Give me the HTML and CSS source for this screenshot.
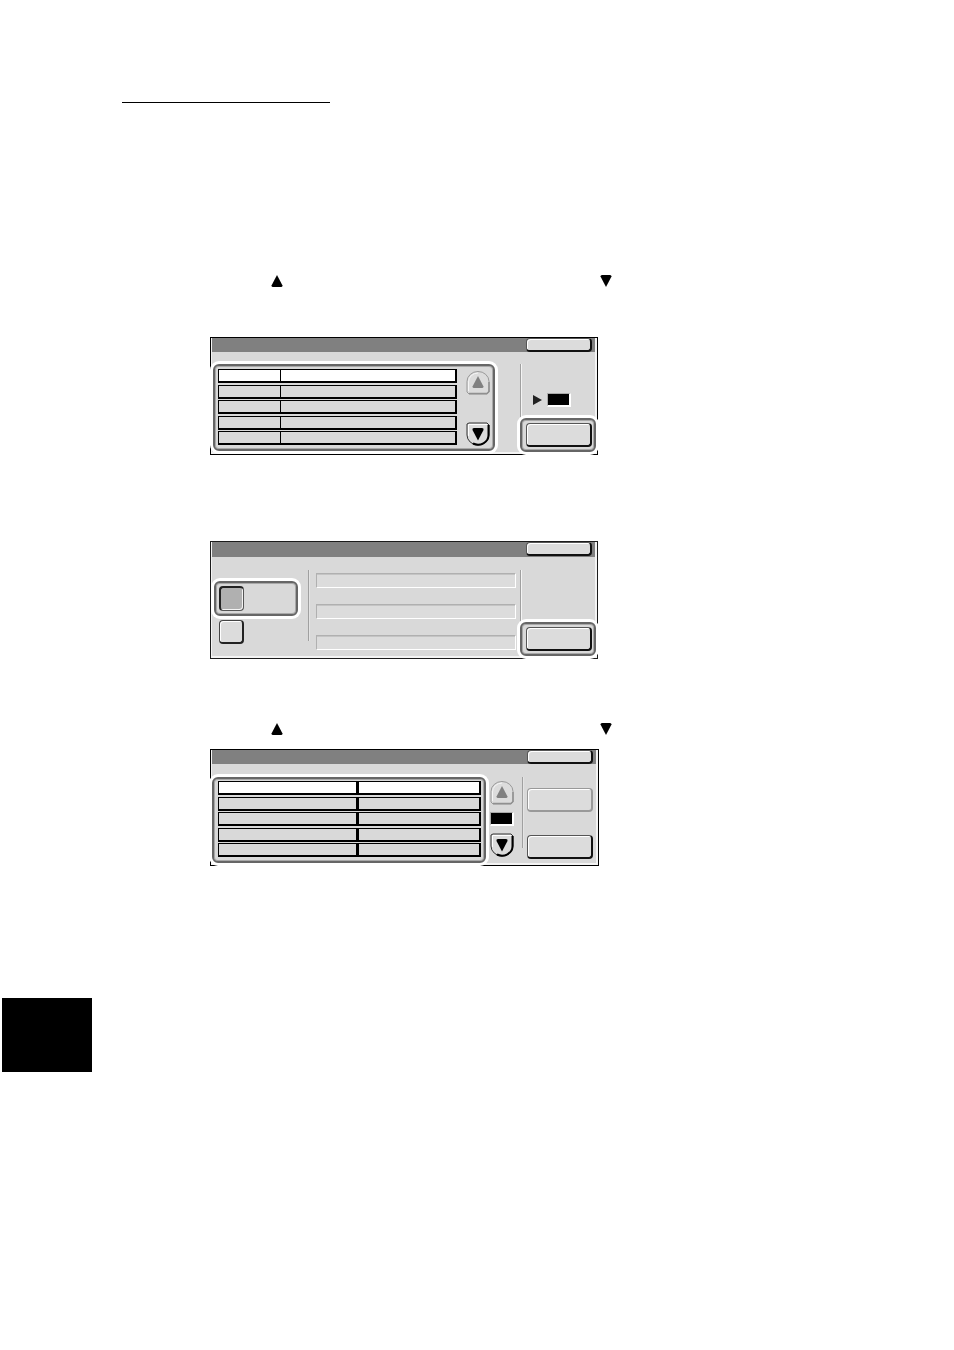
FILE: index.html
```html
<!DOCTYPE html>
<html lang="en">
<head>
    <meta charset="UTF-8">
    <meta name="viewport" content="width=device-width, initial-scale=1.0">
    <title>Control Panel Screens</title>
    <link rel="stylesheet" href="styles.css">
</head>
<body>
    <!-- shared shapes -->
    <svg class="defs" aria-hidden="true">
        <symbol id="tri-up" viewBox="0 0 12 12"><path d="M6 0 L11.5 10.5 Q11.5 12 10 12 H2 Q0.5 12 0.5 10.5 Z"/></symbol>
        <symbol id="tri-down" viewBox="0 0 12 12"><path d="M6 12 L11.5 1.5 Q11.5 0 10 0 H2 Q0.5 0 0.5 1.5 Z"/></symbol>
        <symbol id="scroll-up" viewBox="0 0 24 24">
            <path d="M1 21V10.5A11 10 0 0 1 23 10.5V21L21 23H3Z" fill="#dcdcdc" stroke="#999"/>
            <path d="M2.5 20V11A9.5 9 0 0 1 12 2" fill="none" stroke="#f5f5f5"/>
            <path d="M3 22.5H21L23 20.5V11" fill="none" stroke="#909090" stroke-width="1.5"/>
            <path d="M12 5L17.5 15.5Q17.5 17 16 17H8Q6.5 17 6.5 15.5Z" fill="#808080"/>
        </symbol>
        <symbol id="scroll-down" viewBox="0 0 24 24">
            <path d="M1 2L3 1H21L23 3V13A11 10 0 0 1 1 13Z" fill="#dcdcdc" stroke="#333"/>
            <path d="M2.5 14V2.5H21" fill="none" stroke="#fff"/>
            <path d="M22.5 3V13A10.5 9.5 0 0 1 7 21.5" fill="none" stroke="#000" stroke-width="2"/>
            <path d="M12 18.5L17.5 8Q18 6 16 6H8Q6 6 6.5 8Z"/>
        </symbol>
    </svg>

    <main class="page">
        <hr class="head-rule">

        <div class="hint hint-first">
            <svg class="tri"><use href="#tri-up"/></svg>
            <svg class="tri"><use href="#tri-down"/></svg>
        </div>

        <section class="panel">
            <div class="titlebar"><button class="btn btn-close" aria-label="Close"></button></div>
            <div class="panel-body body-list">
                <div class="frame list-frame">
                    <div class="rows">
                        <button class="row selected" aria-label="Item 1"><span></span></button>
                        <button class="row" aria-label="Item 2"><span></span></button>
                        <button class="row" aria-label="Item 3"><span></span></button>
                        <button class="row" aria-label="Item 4"><span></span></button>
                        <button class="row" aria-label="Item 5"><span></span></button>
                    </div>
                    <div class="scroll">
                        <button class="scroll-btn" aria-label="Up" disabled><svg><use href="#scroll-up"/></svg></button>
                        <button class="scroll-btn" aria-label="Down"><svg><use href="#scroll-down"/></svg></button>
                    </div>
                </div>
                <div class="side">
                    <div class="side-info">
                        <svg class="play" viewBox="0 0 9 10"><path d="M0 0L9 5L0 10Z"/></svg>
                        <span class="counter"></span>
                    </div>
                    <div class="frame action-frame"><button class="btn" aria-label="Change settings"></button></div>
                </div>
            </div>
        </section>

        <section class="panel panel-second">
            <div class="titlebar tall"><button class="btn btn-close" aria-label="Close"></button></div>
            <div class="panel-body body-options">
                <div class="options">
                    <label class="frame option-frame"><input type="radio" name="mode" aria-label="On" checked></label>
                    <label class="option"><input type="radio" name="mode" aria-label="Off"></label>
                </div>
                <div class="divider"></div>
                <div class="fields">
                    <input type="text" aria-label="Current value">
                    <input type="text" aria-label="New value">
                    <input type="text" aria-label="Range">
                </div>
                <div class="side">
                    <div class="side-info"></div>
                    <div class="frame action-frame"><button class="btn" aria-label="Save"></button></div>
                </div>
            </div>
        </section>

        <div class="hint hint-second">
            <svg class="tri"><use href="#tri-up"/></svg>
            <svg class="tri"><use href="#tri-down"/></svg>
        </div>

        <section class="panel panel-wide">
            <div class="titlebar"><button class="btn btn-close" aria-label="Close"></button></div>
            <div class="panel-body body-pairs">
                <div class="frame pair-frame">
                    <div class="rows">
                        <button class="pair selected" aria-label="Setting 1"><span></span><span></span></button>
                        <button class="pair" aria-label="Setting 2"><span></span><span></span></button>
                        <button class="pair" aria-label="Setting 3"><span></span><span></span></button>
                        <button class="pair" aria-label="Setting 4"><span></span><span></span></button>
                        <button class="pair" aria-label="Setting 5"><span></span><span></span></button>
                    </div>
                </div>
                <div class="scroll scroll-pages">
                    <button class="scroll-btn" aria-label="Up" disabled><svg><use href="#scroll-up"/></svg></button>
                    <span class="counter"></span>
                    <button class="scroll-btn" aria-label="Down"><svg><use href="#scroll-down"/></svg></button>
                </div>
                <div class="divider"></div>
                <div class="actions">
                    <button class="btn" aria-label="Confirm" disabled></button>
                    <button class="btn" aria-label="Change settings"></button>
                </div>
            </div>
        </section>

        <div class="chapter-tab"></div>
    </main>
</body>
</html>
```
FILE: styles.css
```css
* {
    box-sizing: border-box;
}
body {
    margin: 0;
    background: #fff;
    font-family: "Liberation Sans", Arial, sans-serif;
}
button, input {
    margin: 0;
    padding: 0;
    border-radius: 0;
    appearance: none;
}
svg {
    display: block;
}
.defs {
    display: none;
}
.page {
    padding: 102px 0 40px;
}
.head-rule {
    width: 208px;
    height: 1px;
    margin: 0 0 0 122px;
    border: 0;
    background: #000;
}

/* arrow marks above a panel */
.hint {
    display: flex;
    gap: 317px;
    margin-left: 271px;
}
.hint-first {
    margin-top: 172px;
    margin-bottom: 50px;
}
.hint-second {
    margin-top: 64px;
    margin-bottom: 14px;
}
.tri {
    width: 12px;
    height: 12px;
}

/* panels */
.panel {
    max-width: 388px;
    margin-left: 210px;
    border: 1px solid #000;
    background: #d9d9d9;
    box-shadow: inset -2px -2px 0 #f4f4f4, inset 1px 0 0 #f4f4f4;
}
.panel-second {
    margin-top: 86px;
    border-color: #1c1c1c;
}
.panel-wide {
    max-width: 389px;
}
.titlebar {
    display: flex;
    justify-content: flex-end;
    height: 14px;
    margin: 0 2px 0 1px;
    padding-right: 3px;
    background: #808080;
}
.titlebar.tall {
    height: 15px;
}
.panel-body {
    display: flex;
    align-items: flex-start;
}
.body-list {
    padding: 12px 1px 2px 2px;
}
.body-options {
    padding: 13px 1px 2px 3px;
}
.body-pairs {
    padding: 13px 5px 2px 1px;
}

/* buttons */
.btn {
    display: block;
    width: 66px;
    height: 24px;
    border: 1px solid #555;
    border-right: 2px solid #111;
    border-bottom: 2px solid #111;
    border-radius: 4px;
    background: #dcdcdc;
    box-shadow: inset 1px 1px 0 #fff;
}
.btn:disabled {
    border: 1px solid #999;
    border-right-width: 2px;
    border-bottom-width: 2px;
}
.btn-close {
    height: 14px;
}

/* highlighted areas */
.frame {
    border: 2px solid #666;
    border-radius: 6px;
    background: #d9d9d9;
    box-shadow: 0 0 0 3px #fff, inset 0 0 0 1px #a8a8a8;
}
.list-frame {
    display: flex;
    flex: 1;
    gap: 10px;
    height: 87px;
    margin-right: 25px;
    padding: 3px;
}
.pair-frame {
    flex: 1;
    height: 86px;
    padding: 2px 4px;
}
.action-frame {
    height: 34px;
    padding: 3px 4px;
}

/* list rows */
.rows {
    display: flex;
    flex: 1;
    flex-direction: column;
    justify-content: space-between;
    height: 76px;
}
.row {
    display: flex;
    height: 14px;
    border: 1px solid #000;
    border-bottom-width: 2px;
    background: #d9d9d9;
    box-shadow: 1px 0 0 #000;
}
.row span {
    width: 62px;
    height: 11px;
    border-right: 1px solid #000;
}
.pair {
    display: grid;
    grid-template-columns: 139px 1fr;
    gap: 1px;
    height: 14px;
    border: 0;
    background: none;
}
.pair span {
    height: 14px;
    border: 1px solid #000;
    border-bottom-width: 2px;
    background: #d9d9d9;
    box-shadow: 1px 0 0 #000;
}
.row.selected, .pair.selected span {
    background: #fff;
}

/* scroll arrows */
.scroll {
    display: flex;
    flex-direction: column;
    gap: 27px;
    width: 24px;
    padding-top: 2px;
}
.scroll-pages {
    gap: 7px;
    margin: 2px 8px 0 4px;
}
.scroll-btn {
    width: 24px;
    height: 24px;
    border: 0;
    background: none;
}
.scroll-btn svg {
    width: 24px;
    height: 24px;
}
.counter {
    width: 24px;
    height: 14px;
    border: 1px solid #aaa;
    border-right: 2px solid #fff;
    border-bottom: 2px solid #fff;
    background: #000;
}

/* side column */
.side {
    width: 76px;
}
.side-info {
    display: flex;
    align-items: flex-end;
    height: 54px;
    gap: 5px;
    padding: 0 0 11px 12px;
    border-left: 1px solid #a0a0a0;
    box-shadow: inset 1px 0 0 #f4f4f4;
}
.body-options .side-info {
    height: 52px;
}
.play {
    width: 9px;
    height: 10px;
    margin-bottom: 2px;
    fill: #222;
}
.divider {
    width: 2px;
    height: 71px;
    border-left: 1px solid #a0a0a0;
    border-right: 1px solid #e4e4e4;
}
.actions {
    display: flex;
    flex-direction: column;
    gap: 23px;
    margin-left: 3px;
    padding-top: 11px;
}

/* choices and value fields */
.options {
    width: 84px;
    margin-right: 10px;
    padding-top: 11px;
}
.option-frame {
    display: block;
    height: 35px;
    margin-bottom: 4px;
    padding: 3px;
}
.option {
    display: block;
    padding-left: 5px;
}
.options input {
    display: block;
    width: 25px;
    height: 24px;
    border: 1px solid #444;
    border-right: 2px solid #222;
    border-bottom: 2px solid #222;
    border-radius: 4px;
    background: #dcdcdc;
    box-shadow: inset 1px 1px 0 #fff;
}
.options input:checked {
    height: 25px;
    border: 2px solid #222;
    border-right: 1px solid #555;
    border-bottom: 1px solid #555;
    background: #b0b0b0;
    box-shadow: inset -1px -1px 0 #f4f4f4;
}
.fields {
    display: flex;
    flex: 1;
    flex-direction: column;
    gap: 16px;
    margin: 3px 4px 0 6px;
}
.fields input {
    width: 100%;
    height: 15px;
    border: 1px solid #b0b0b0;
    border-right-color: #fff;
    border-bottom-color: #fff;
    background: #dcdcdc;
    box-shadow: inset 0 1px 0 #c4c4c4;
}

/* black tab at the page edge */
.chapter-tab {
    width: 90px;
    height: 74px;
    margin-top: 132px;
    margin-left: 2px;
    background: #000;
}
```
